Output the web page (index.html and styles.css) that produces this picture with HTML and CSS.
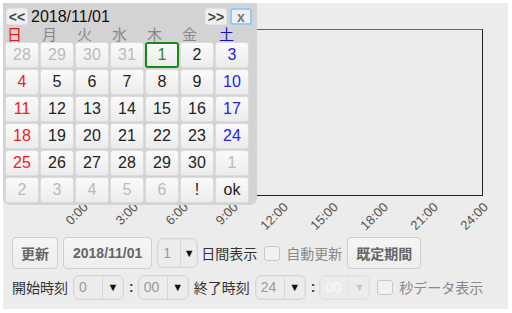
FILE: index.html
```html
<!DOCTYPE html>
<html lang="ja">
<head>
  <meta charset="UTF-8">
  <title>グラフ表示</title>
  <link rel="stylesheet" href="styles.css">
</head>
<body>
  <div class="app">
    <!-- chart -->
    <div class="chart"></div>
    <div class="axis">
      <span class="tick" style="left: 38px;">0:00</span>
      <span class="tick" style="left: 88px;">3:00</span>
      <span class="tick" style="left: 138px;">6:00</span>
      <span class="tick" style="left: 188px;">9:00</span>
      <span class="tick" style="left: 238px;">12:00</span>
      <span class="tick" style="left: 288px;">15:00</span>
      <span class="tick" style="left: 338px;">18:00</span>
      <span class="tick" style="left: 388px;">21:00</span>
      <span class="tick" style="left: 438px;">24:00</span>
    </div>

    <!-- controls -->
    <div class="controls">
      <div class="row">
        <button class="btn">更新</button>
        <button class="btn btn-date">2018/11/01</button>
        <span class="sel sel-days"><span class="val">1</span><span class="arrow">&#9660;</span></span>
        <span class="label">日間表示</span>
        <span class="check"></span>
        <span class="label muted">自動更新</span>
        <button class="btn">既定期間</button>
      </div>
      <div class="row row-time">
        <span class="label">開始時刻</span>
        <span class="sel"><span class="val">0</span><span class="arrow">&#9660;</span></span>
        <span class="colon">:</span>
        <span class="sel"><span class="val">00</span><span class="arrow">&#9660;</span></span>
        <span class="label">終了時刻</span>
        <span class="sel"><span class="val">24</span><span class="arrow">&#9660;</span></span>
        <span class="colon">:</span>
        <span class="sel disabled"><span class="val">00</span><span class="arrow">&#9660;</span></span>
        <span class="check"></span>
        <span class="label muted">秒データ表示</span>
      </div>
    </div>

    <!-- date picker popup -->
    <div class="calendar">
      <div class="cal-head">
        <button class="nav">&lt;&lt;</button>
        <span class="cal-title">2018/11/01</span>
        <button class="nav next">&gt;&gt;</button>
        <button class="nav close">x</button>
      </div>
      <div class="cal-week">
        <span class="sun">日</span><span>月</span><span>火</span><span>水</span><span>木</span><span>金</span><span class="sat">土</span>
      </div>
      <div class="cal-grid">
        <span class="day other">28</span><span class="day other">29</span><span class="day other">30</span><span class="day other">31</span><span class="day today">1</span><span class="day">2</span><span class="day sat">3</span>
        <span class="day sun">4</span><span class="day">5</span><span class="day">6</span><span class="day">7</span><span class="day">8</span><span class="day">9</span><span class="day sat">10</span>
        <span class="day sun">11</span><span class="day">12</span><span class="day">13</span><span class="day">14</span><span class="day">15</span><span class="day">16</span><span class="day sat">17</span>
        <span class="day sun">18</span><span class="day">19</span><span class="day">20</span><span class="day">21</span><span class="day">22</span><span class="day">23</span><span class="day sat">24</span>
        <span class="day sun">25</span><span class="day">26</span><span class="day">27</span><span class="day">28</span><span class="day">29</span><span class="day">30</span><span class="day other">1</span>
        <span class="day other">2</span><span class="day other">3</span><span class="day other">4</span><span class="day other">5</span><span class="day other">6</span><span class="day">!</span><span class="day">ok</span>
      </div>
    </div>
  </div>
</body>
</html>
```

FILE: styles.css
```css
body {
  margin: 0;
  padding: 3px;
  background: #fff;
  font-family: "Liberation Sans", "Noto Sans CJK JP", sans-serif;
}

.app {
  position: relative;
  width: 505px;
  height: 306px;
  background: #ececec;
  overflow: hidden;
}

.chart {
  margin: 26px 0 0 79px;
  width: 399px;
  height: 165px;
  border: 1px solid #222;
  border-top-color: #666;
}

.axis {
  position: relative;
  height: 40px;
}

.tick {
  position: absolute;
  top: 4px;
  width: 40px;
  text-align: right;
  font-size: 13px;
  line-height: 14px;
  color: #555;
  transform-origin: 100% 0;
  transform: rotate(-45deg);
}

.controls {
  padding-left: 9px;
}

.row {
  display: flex;
  align-items: center;
  height: 32px;
  margin-top: 1px;
}

.row-time {
  height: 26px;
  margin-top: 5px;
}

.btn {
  height: 32px;
  padding: 0 8px;
  margin-right: 5px;
  background: linear-gradient(#f6f6f6, #ededed);
  border: 1px solid #cfcfcf;
  border-radius: 4px;
  font-family: inherit;
  font-size: 14px;
  font-weight: bold;
  color: #666;
}

.btn-date {
  padding: 0 9px;
}

.label {
  font-size: 14px;
  color: #333;
  margin-right: 5px;
}

.label.muted {
  color: #888;
}

.sel {
  display: flex;
  align-items: center;
  height: 25px;
  width: 51px;
  margin-right: 5px;
  border: 1px solid #d6d6d6;
  border-radius: 6px;
  box-shadow: inset 0 0 0 1px #e4e4e4;
  font-size: 14px;
  color: #999;
  box-sizing: border-box;
}

.sel-days {
  width: 41px;
  height: 30px;
  margin-right: 3px;
}

.sel .val {
  flex: 1;
  padding-left: 5px;
  line-height: 18px;
}

.sel .arrow {
  width: 20px;
  height: 100%;
  border-left: 1px solid #d6d6d6;
  color: #111;
  font-size: 11px;
  display: flex;
  align-items: center;
  justify-content: center;
}

.sel-days .arrow {
  width: 16px;
}

.sel.disabled {
  border-color: #e2e2e2;
}

.sel.disabled .val {
  color: #fafafa;
}

.sel.disabled .arrow {
  color: #c8c8c8;
  border-left-color: #e2e2e2;
}

.colon {
  font-size: 14px;
  font-weight: bold;
  color: #444;
  margin-right: 4px;
}

.check {
  width: 14px;
  height: 13px;
  border: 1px solid #c9c9c9;
  border-radius: 3px;
  background: #f2f2f2;
  margin: 0 6px 0 2px;
}

/* date picker */
.calendar {
  position: absolute;
  left: 0;
  top: 0;
  width: 254px;
  height: 202px;
  padding: 5px 0 0 2px;
  box-sizing: border-box;
  background: #d3d3d3;
  border-radius: 0 0 7px 7px;
}

.cal-head {
  display: flex;
  align-items: center;
  height: 17px;
}

.nav {
  width: 22px;
  height: 17px;
  padding: 0;
  margin-left: 1px;
  background: #f0f0f0;
  border: 1px solid #e4e4e4;
  border-radius: 3px;
  font-family: inherit;
  font-size: 14px;
  font-weight: bold;
  color: #444;
  line-height: 14px;
}

.nav.next {
  margin-left: auto;
}

.nav.close {
  margin-left: 3px;
  margin-right: 5px;
  border: 2px solid #8fcdf6;
  color: #777;
}

.cal-title {
  margin-left: 3px;
  font-size: 16px;
  color: #111;
}

.cal-week {
  display: grid;
  grid-template-columns: repeat(7, 35px);
  height: 15px;
  margin-top: 2px;
  font-size: 15px;
  line-height: 16px;
  color: #888;
}

.cal-week span {
  padding-left: 2px;
}

.cal-week .sun {
  color: #e11;
}

.cal-week .sat {
  color: #11c;
  padding-left: 4px;
}

.cal-grid {
  display: grid;
  grid-template-columns: repeat(7, 34px);
  grid-auto-rows: 26px;
  gap: 1px;
}

.day {
  display: flex;
  align-items: center;
  justify-content: center;
  background: linear-gradient(#fafafa, #ececec);
  border: 1px solid #dcdcdc;
  border-radius: 3px;
  font-size: 16px;
  color: #222;
}

.day.sun {
  color: #f02020;
}

.day.sat {
  color: #2222ee;
}

.day.other {
  color: #bbb;
}

.day.today {
  border: 2px solid #158a15;
  color: #2a8a2a;
}
```
